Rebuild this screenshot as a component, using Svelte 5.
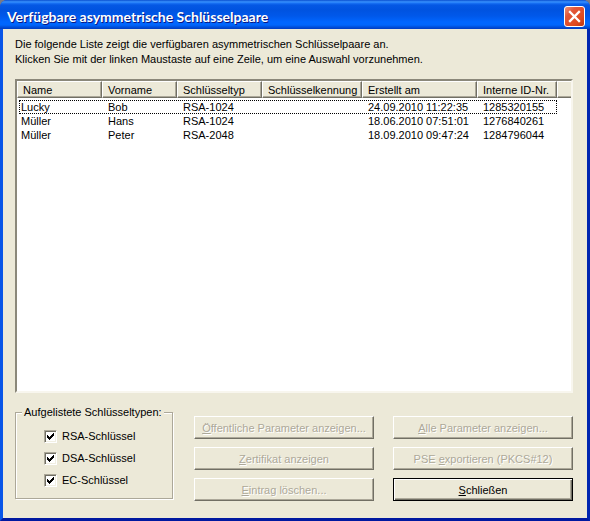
<script>
  const columns = ['Name', 'Vorname', 'Schlüsseltyp', 'Schlüsselkennung', 'Erstellt am', 'Interne ID-Nr.'];
  const rows = [
    ['Lucky', 'Bob', 'RSA-1024', '', '24.09.2010 11:22:35', '1285320155'],
    ['Müller', 'Hans', 'RSA-1024', '', '18.06.2010 07:51:01', '1276840261'],
    ['Müller', 'Peter', 'RSA-2048', '', '18.09.2010 09:47:24', '1284796044']
  ];
  let types = $state([
    { label: 'RSA-Schlüssel', on: true },
    { label: 'DSA-Schlüssel', on: true },
    { label: 'EC-Schlüssel', on: true }
  ]);
  let focused = $state(0);
</script>

<div class="window">
  <header class="titlebar">
    <h1>Verfügbare asymmetrische Schlüsselpaare</h1>
    <button class="close" aria-label="Fenster schließen">
      <svg viewBox="0 0 21 21" width="21" height="21" aria-hidden="true">
        <defs>
          <linearGradient id="red" x1="0" y1="0" x2="1" y2="1">
            <stop offset="0" stop-color="#ee9a80" />
            <stop offset="0.3" stop-color="#e2573a" />
            <stop offset="0.7" stop-color="#df4a20" />
            <stop offset="1" stop-color="#b83410" />
          </linearGradient>
        </defs>
        <rect x="0.5" y="0.5" width="20" height="20" rx="2.5" fill="url(#red)" stroke="#fff" />
        <path d="M6 6L15 15M15 6L6 15" stroke="#fff" stroke-width="2.3" stroke-linecap="square" />
      </svg>
    </button>
  </header>

  <main>
    <p>Die folgende Liste zeigt die verfügbaren asymmetrischen Schlüsselpaare an.<br />Klicken Sie mit der linken Maustaste auf eine Zeile, um eine Auswahl vorzunehmen.</p>

    <div class="list">
      <table>
        <colgroup>
          <col class="w85" /><col class="w75" /><col class="w85" /><col class="w100" /><col class="w115" /><col class="w80" /><col />
        </colgroup>
        <thead>
          <tr>
            {#each columns as column}<th scope="col">{column}</th>{/each}
            <td class="rest"></td>
          </tr>
        </thead>
        <tbody>
          {#each rows as row, i}
            <tr class:focused={focused === i} onclick={() => (focused = i)}>
              {#each row as cell}<td>{cell}</td>{/each}
              <td class="end"></td>
            </tr>
          {/each}
        </tbody>
      </table>
    </div>

    <div class="bottom">
      <fieldset>
        <legend>Aufgelistete Schlüsseltypen:</legend>
        {#each types as type}
          <label><input type="checkbox" bind:checked={type.on} />{type.label}</label>
        {/each}
      </fieldset>
      <div class="actions">
        <button disabled><u>Ö</u>ffentliche Parameter anzeigen...</button>
        <button disabled><u>A</u>lle Parameter anzeigen...</button>
        <button disabled><u>Z</u>ertifikat anzeigen</button>
        <button disabled>PSE <u>e</u>xportieren (PKCS#12)</button>
        <button disabled><u>E</u>intrag löschen...</button>
        <button class="default"><u>S</u>chließen</button>
      </div>
    </div>
  </main>
</div>

<style>
  :global(body) {
    margin: 0;
    background: #7b7b84;
  }
  .window {
    box-sizing: border-box;
    min-height: 100vh;
    display: flex;
    flex-direction: column;
    border-radius: 7px 7px 0 0;
    overflow: hidden;
    background: #0a48e4;
    font: 11px/14px "Liberation Sans", Arial, sans-serif;
    color: #000;
  }
  .titlebar {
    height: 29px;
    box-sizing: border-box;
    padding: 4px 5px 0 7px;
    display: flex;
    align-items: center;
    justify-content: space-between;
    background: linear-gradient(#0a4fd0 0, #3a94ff 2px, #1b74f5 3px, #0558e4 5px, #0053e0 10px, #0058ea 16px, #0066ff 22px, #0066fc 25px, #0050dc 27px, #003cc0 29px);
  }
  h1 {
    margin: 0;
    font: bold 14px/20px Lato, "Open Sans", sans-serif;
    color: #fff;
    text-shadow: 1px 1px #0a1883;
    white-space: nowrap;
  }
  .close {
    display: block;
    padding: 0;
    border: 0;
    background: none;
    line-height: 0;
  }
  main {
    flex: 1;
    display: flex;
    flex-direction: column;
    padding: 8px 14px 17px 12px;
    border: solid #0855e8;
    border-width: 0 3px 3px;
    border-right-color: #0025b0;
    border-bottom-color: #0018a0;
    background: #ece9d8;
  }
  p {
    margin: 0 0 12px;
    line-height: 15px;
  }
  .list {
    flex: 1;
    background: #fff;
    border: 2px solid;
    border-color: #8b887a #f8f6ee #f8f6ee #8b887a;
  }
  table {
    width: 100%;
    table-layout: fixed;
    border-collapse: separate;
    border-spacing: 0;
  }
  .w75 { width: 75px; }
  .w80 { width: 80px; }
  .w85 { width: 85px; }
  .w100 { width: 100px; }
  .w115 { width: 115px; }
  th, .rest {
    box-sizing: border-box;
    height: 17px;
    padding: 1px 0 0 5px;
    font-weight: normal;
    text-align: left;
    line-height: 14px;
    white-space: nowrap;
    background: #ece9d8;
    border: 1px solid;
    border-color: #fff #716f64 #716f64 #fff;
    box-shadow: inset -1px -1px #aca899;
  }
  .rest {
    border-right: 0;
    box-shadow: inset 0 -1px #aca899;
  }
  tbody::before {
    content: "";
    display: table-row;
    height: 2px;
  }
  tbody td {
    height: 14px;
    padding: 0 0 0 6px;
    white-space: nowrap;
  }
  tbody td:first-child { padding-left: 4px; }
  tbody tr { position: relative; }
  .focused .end::after {
    content: "";
    position: absolute;
    inset: 0 14px 0 2px;
    border: 1px dotted #000;
  }
  .bottom {
    display: flex;
    gap: 21px;
    margin-top: 12px;
  }
  fieldset {
    box-sizing: border-box;
    width: 158px;
    height: 94px;
    margin: 0;
    padding: 10px 0 0 28px;
    border: 1px solid #aca899;
    box-shadow: 1px 1px #fff, inset 1px 1px #fff;
    display: flex;
    flex-direction: column;
    gap: 8px;
  }
  legend {
    margin-left: -22px;
    padding: 0 2px;
    background: #ece9d8;
  }
  label {
    display: flex;
    align-items: center;
    gap: 5px;
  }
  input {
    appearance: none;
    box-sizing: border-box;
    width: 13px;
    height: 13px;
    margin: 0;
    border: 1px solid;
    border-color: #aca899 #fff #fff #aca899;
    box-shadow: inset 1px 1px #716f64, inset -1px -1px #f1efe2;
    background: #fff;
  }
  input:checked {
    background: #fff url("data:image/svg+xml,%3Csvg xmlns='http://www.w3.org/2000/svg' viewBox='0 0 11 11'%3E%3Cpath d='M2 4h1v1h1v1h1V5h1V4h1V3h1V2h1v3H8v1H7v1H6v1H5v1H4V8H3V7H2z'/%3E%3C/svg%3E") 0 0 / 11px 11px no-repeat;
  }
  .actions {
    flex: 1;
    display: grid;
    grid-template-columns: 1fr 1fr;
    gap: 8px 19px;
    align-content: start;
    padding-top: 11px;
  }
  .actions button {
    height: 23px;
    padding: 0;
    font: inherit;
    color: #000;
    background: #ece9d8;
    border: 1px solid;
    border-color: #fff #716f64 #716f64 #fff;
    box-shadow: inset -1px -1px #aca899;
  }
  .actions button:disabled {
    color: #aca899;
    text-shadow: 1px 1px #fff;
  }
  .actions .default {
    border-color: #000;
    box-shadow: inset 1px 1px #fff, inset -1px -1px #716f64, inset -2px -2px #aca899;
  }
</style>
